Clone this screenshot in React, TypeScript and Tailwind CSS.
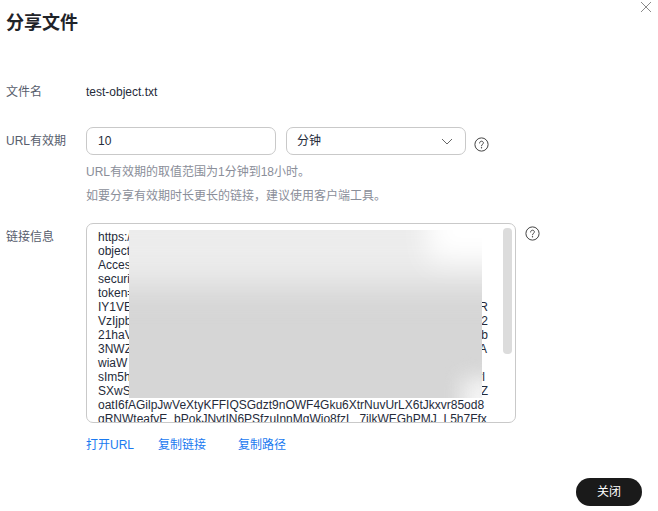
import React from "react";

const font = '"Liberation Sans","Noto Sans CJK SC",sans-serif';

function Help({ className }: { className?: string }) {
  return (
    <svg width="15" height="15" viewBox="0 0 15 15" fill="none" className={className}>
      <circle cx="7.5" cy="7.5" r="6.6" stroke="#444" strokeWidth="1" />
      <path d="M5.6 6c0-1.1.9-1.8 1.9-1.8s1.9.7 1.9 1.7c0 1.4-1.9 1.4-1.9 2.9" stroke="#444" strokeWidth="1" strokeLinecap="round" />
      <circle cx="7.5" cy="10.8" r=".7" fill="#444" />
    </svg>
  );
}

const lines: [string, string, string][] = [
  ["https:/", "", "w-[390px]"],
  ["object", "", "w-[390px]"],
  ["Acces", "", "w-[390px]"],
  ["securi", "", "w-[390px]"],
  ["token=", "", "w-[390px]"],
  ["IY1VE", "R", "w-[390px]"],
  ["VzIjpb", "2", "w-[390px]"],
  ["21haV", "b", "w-[390px]"],
  ["3NWZ", "A", "w-[389px]"],
  ["wiaW", "", "w-[390px]"],
  ["sIm5h", "rl", "w-[387px]"],
  ["SXwS", "Z", "w-[390px]"],
];

export default function App() {
  return (
    <div
      className="relative w-[658px] h-[511px] bg-white overflow-hidden flex flex-col pl-[6px] text-[12px] text-[#575d6c]"
      style={{ fontFamily: font }}
    >
      <svg width="12" height="12" viewBox="0 0 12 12" className="absolute left-[640px] top-[1px]" fill="none">
        <path d="M1 1l10 10M11 1L1 11" stroke="#8a8a8a" strokeWidth="1" />
      </svg>

      <h1 className="mt-[11px] h-[24px] leading-[24px] text-[18px] font-bold text-[#1f2329]">分享文件</h1>

      <div className="mt-[47px] flex items-center h-[20px]">
        <div className="w-[80px]">文件名</div>
        <div className="text-[#252b3a]">test-object.txt</div>
      </div>

      <div className="mt-[25px] flex">
        <div className="w-[80px] leading-[28px]">URL有效期</div>
        <div>
          <div className="flex items-center">
            <div className="w-[190px] h-[28px] border border-[#c9c9c9] rounded-[7px] pl-[11px] leading-[26px] text-[#252b3a]">10</div>
            <div className="ml-[10px] w-[180px] h-[28px] border border-[#c9c9c9] rounded-[7px] pl-[10px] pr-[12px] flex items-center justify-between text-[#252b3a]">
              <span>分钟</span>
              <svg width="12" height="7" viewBox="0 0 12 7" fill="none">
                <path d="M1 1l5 5 5-5" stroke="#666" strokeWidth="1" />
              </svg>
            </div>
            <Help className="ml-[8px] mt-[6px]" />
          </div>
          <div className="mt-[7px] text-[#8a8e99] leading-[20px]">URL有效期的取值范围为1分钟到18小时。</div>
          <div className="mt-[4px] text-[#8a8e99] leading-[20px]">如要分享有效期时长更长的链接，建议使用客户端工具。</div>
        </div>
      </div>

      <div className="mt-[17px] flex">
        <div className="w-[80px] leading-[28px]">链接信息</div>
        <div>
          <div className="flex">
            <div className="relative w-[430px] h-[200px] border border-[#c9c9c9] rounded-[7px] overflow-hidden pl-[11px] pt-[6px] text-[12px] leading-[14px] text-[#252b3a]">
              {lines.map(([a, b, w]) => (
                <div key={a} className={`flex justify-between ${w}`}>
                  <span>{a}</span>
                  <span>{b}</span>
                </div>
              ))}
              <div className="whitespace-nowrap">oatI6fAGilpJwVeXtyKFFIQSGdzt9nOWF4Gku6XtrNuvUrLX6tJkxvr85od8</div>
              <div className="whitespace-nowrap h-[14px] overflow-visible">gRNWteafyE_bPokJNvtIN6PSfzuInnMgWjo8fzL_7jlkWEGhPMJ_L5h7Ffx</div>

              <div className="absolute left-[42px] top-[6px] w-[353px] h-[168px] overflow-hidden bg-[#d6d6d6]">
                <div className="absolute left-[-40px] right-[-40px] top-[-30px] h-[85px] bg-[#ececec] blur-[16px]" />
                <div className="absolute right-[-36px] top-[-30px] w-[90px] h-[60px] bg-white blur-[14px]" />
                <div className="absolute right-[-24px] bottom-[-24px] w-[44px] h-[44px] bg-[#f4f4f4] blur-[10px]" />
              </div>

              <div className="absolute left-[416px] top-[4px] w-[9px] h-[126px] rounded-[4px] bg-[#dcdcdc]" />
            </div>
            <Help className="ml-[9px] mt-[3px]" />
          </div>
          <div className="mt-[14px] flex text-[#1a7af0] leading-[16px]">
            <span className="w-[72px]">打开URL</span>
            <span className="w-[80px]">复制链接</span>
            <span>复制路径</span>
          </div>
        </div>
      </div>

      <div className="mt-[25px] mr-[16px] flex justify-end">
        <div className="w-[66px] h-[28px] rounded-full bg-[#1a1a1a] text-white flex items-center justify-center">关闭</div>
      </div>
    </div>
  );
}
